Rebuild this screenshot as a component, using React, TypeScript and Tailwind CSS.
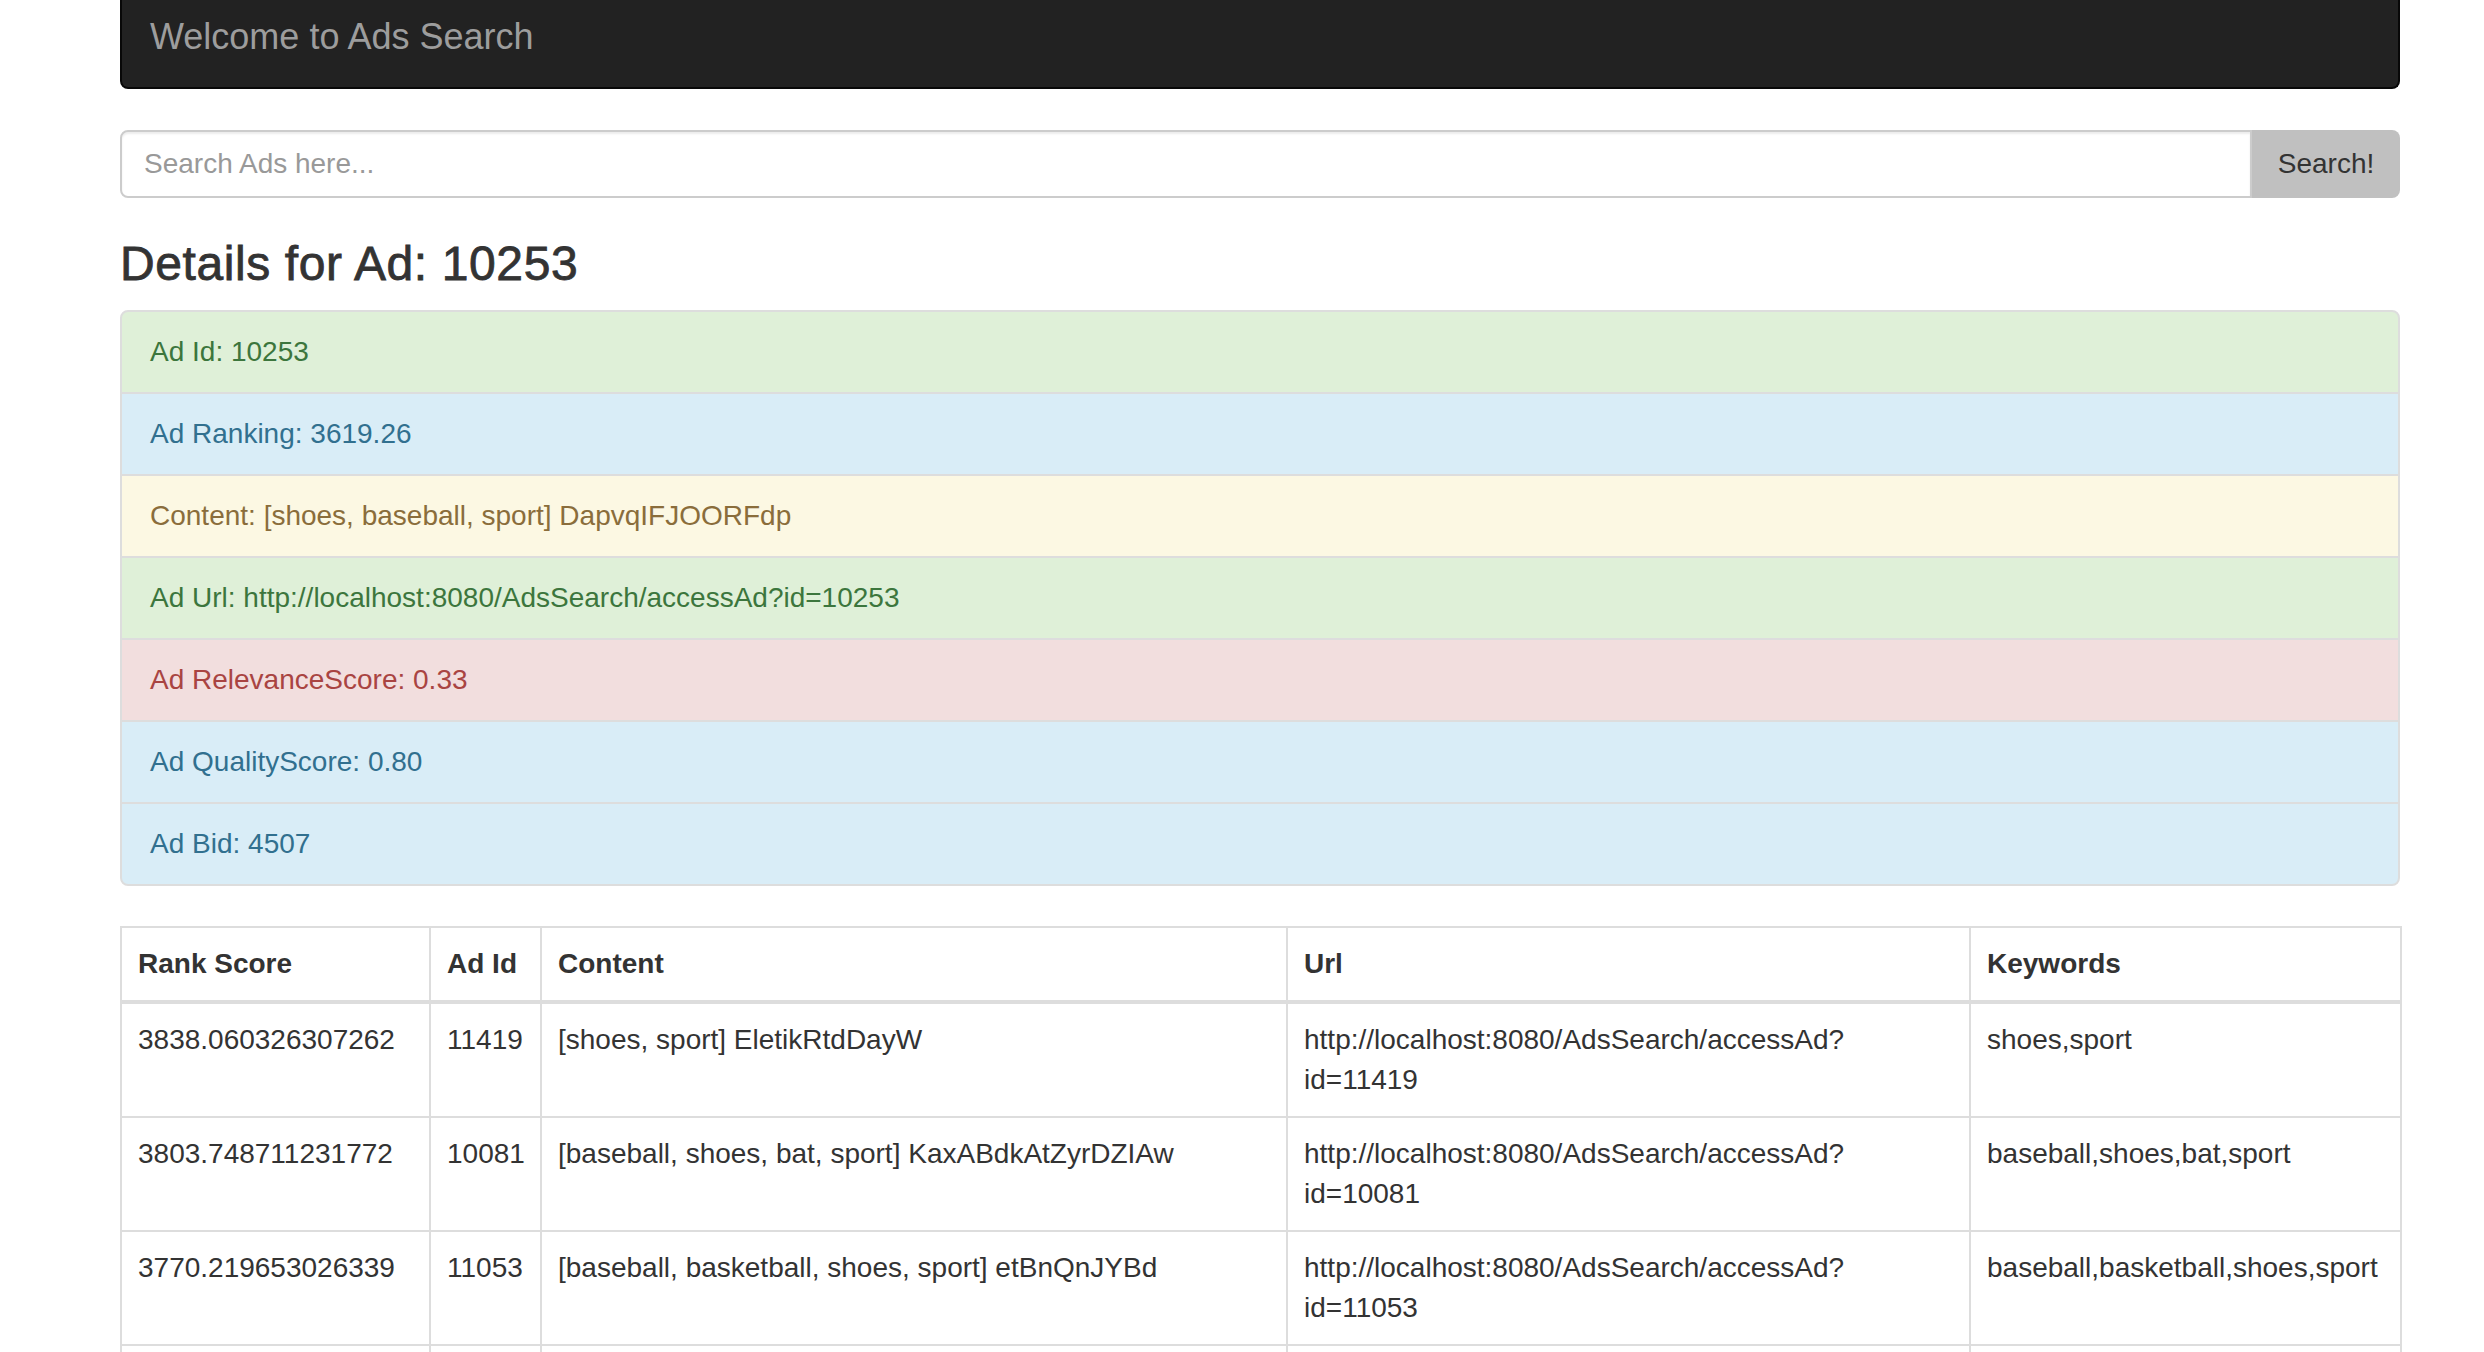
import React from "react";

const items: { text: string; cls: string }[] = [
  { text: "Ad Id: 10253", cls: "bg-[#dff0d8] text-[#3c763d]" },
  { text: "Ad Ranking: 3619.26", cls: "bg-[#d9edf7] text-[#31708f]" },
  { text: "Content: [shoes, baseball, sport] DapvqIFJOORFdp", cls: "bg-[#fcf8e3] text-[#8a6d3b]" },
  { text: "Ad Url: http://localhost:8080/AdsSearch/accessAd?id=10253", cls: "bg-[#dff0d8] text-[#3c763d]" },
  { text: "Ad RelevanceScore: 0.33", cls: "bg-[#f2dede] text-[#a94442]" },
  { text: "Ad QualityScore: 0.80", cls: "bg-[#d9edf7] text-[#31708f]" },
  { text: "Ad Bid: 4507", cls: "bg-[#d9edf7] text-[#31708f]" },
];

const rows = [
  { score: "3838.060326307262", id: "11419", content: "[shoes, sport] EletikRtdDayW", kw: "shoes,sport" },
  { score: "3803.748711231772", id: "10081", content: "[baseball, shoes, bat, sport] KaxABdkAtZyrDZIAw", kw: "baseball,shoes,bat,sport" },
  { score: "3770.219653026339", id: "11053", content: "[baseball, basketball, shoes, sport] etBnQnJYBd", kw: "baseball,basketball,shoes,sport" },
];

export default function App() {
  return (
    <div className="min-h-screen bg-white font-['Liberation_Sans',Arial,sans-serif] text-[#333]">
      <div className="ml-[120px] w-[2280px] pb-[40px]">
        <nav className="h-[89px] rounded-b-[8px] border-2 border-t-0 border-[#080808] bg-[#222] pl-[28px] pt-[17px]">
          <span className="text-[36px] leading-[40px] text-[#9d9d9d]">Welcome to Ads Search</span>
        </nav>

        <div className="mt-[41px] flex h-[68px]">
          <input
            type="text"
            placeholder="Search Ads here..."
            className="h-[68px] flex-1 rounded-l-[8px] border-2 border-[#ccc] bg-white px-[22px] text-[28px] text-[#555] shadow-[inset_0_2px_2px_rgba(0,0,0,0.075)] outline-none placeholder:text-[#999]"
          />
          <button className="h-[68px] w-[148px] rounded-r-[8px] bg-[#c0c0c0] text-[28px] leading-[40px] text-[#333]">
            Search!
          </button>
        </div>

        <h3 className="mt-[40px] mb-[19px] text-[48px] leading-[52.8px] font-normal tracking-[0.6px] text-[#333] [-webkit-text-stroke:0.8px_#333]">
          Details for Ad: 10253
        </h3>

        <div className="mb-[40px] flex flex-col">
          {items.map((it, i) => (
            <div
              key={i}
              className={`border-2 border-[#ddd] px-[28px] py-[20px] text-[28px] leading-[40px] ${it.cls} ${
                i === 0 ? "rounded-t-[8px]" : ""
              } ${i === items.length - 1 ? "rounded-b-[8px]" : "-mb-[2px]"}`}
            >
              {it.text}
            </div>
          ))}
        </div>

        <table className="w-[2280px] table-fixed border-collapse border-2 border-[#ddd] text-[28px] leading-[40px] text-[#333]">
          <thead>
            <tr>
              <th className="w-[309px] border-2 border-b-4 border-[#ddd] p-[16px] text-left font-bold">Rank Score</th>
              <th className="w-[111px] border-2 border-b-4 border-[#ddd] p-[16px] text-left font-bold">Ad Id</th>
              <th className="w-[746px] border-2 border-b-4 border-[#ddd] p-[16px] text-left font-bold">Content</th>
              <th className="w-[683px] border-2 border-b-4 border-[#ddd] p-[16px] text-left font-bold">Url</th>
              <th className="w-[431px] border-2 border-b-4 border-[#ddd] p-[16px] text-left font-bold">Keywords</th>
            </tr>
          </thead>
          <tbody>
            {rows.map((r) => (
              <tr key={r.id}>
                <td className="border-2 border-[#ddd] p-[16px] align-top">{r.score}</td>
                <td className="border-2 border-[#ddd] p-[16px] align-top">{r.id}</td>
                <td className="border-2 border-[#ddd] p-[16px] align-top">{r.content}</td>
                <td className="border-2 border-[#ddd] p-[16px] align-top">
                  http://localhost:8080/AdsSearch/accessAd?
                  <br />
                  id={r.id}
                </td>
                <td className="whitespace-nowrap border-2 border-[#ddd] p-[16px] align-top">{r.kw}</td>
              </tr>
            ))}
            <tr className="h-[114px]">
              <td className="border-2 border-[#ddd] p-[16px]"></td>
              <td className="border-2 border-[#ddd] p-[16px]"></td>
              <td className="border-2 border-[#ddd] p-[16px]"></td>
              <td className="border-2 border-[#ddd] p-[16px]"></td>
              <td className="border-2 border-[#ddd] p-[16px]"></td>
            </tr>
          </tbody>
        </table>
      </div>
    </div>
  );
}
